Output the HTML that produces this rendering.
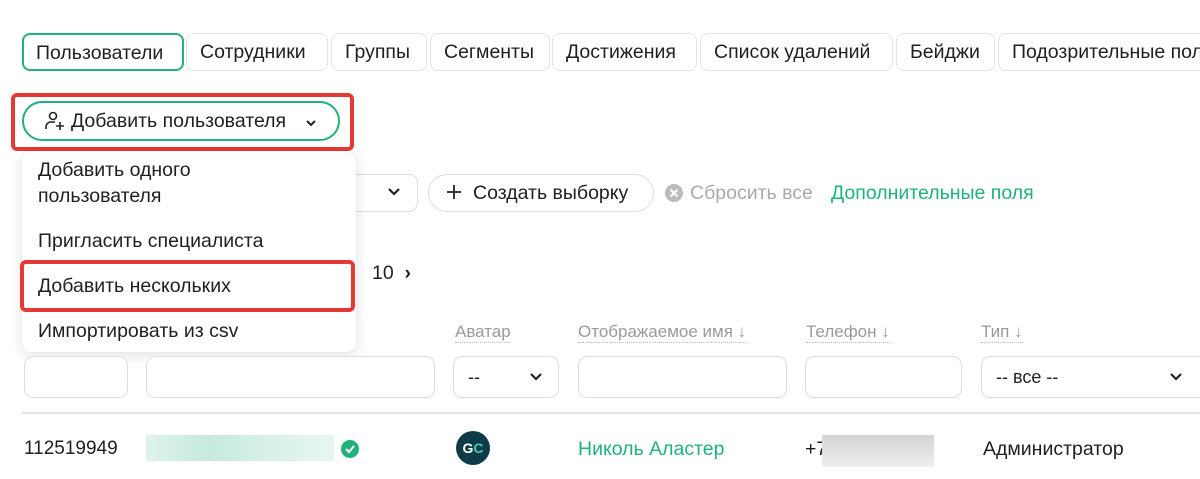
<!DOCTYPE html><html><head><meta charset="utf-8"><style>
body{margin:0;width:1200px;height:479px;overflow:hidden;background:#fff;font-family:"Liberation Sans","Noto Sans CJK SC",sans-serif;color:#1f1f1f;position:relative}
.a{position:absolute;white-space:nowrap}
.tab{position:absolute;top:33px;height:38px;border:1px solid #e2e2e2;border-radius:8px;box-sizing:border-box;font-size:19.5px;line-height:36px;padding-left:13px;white-space:nowrap;overflow:hidden}
.box{position:absolute;border:1px solid #ddd;border-radius:9px;box-sizing:border-box;background:#fff}
.h{position:absolute;top:322px;font-size:17px;color:#9a9a9a;border-bottom:1px dotted #bbb;line-height:20px}
.m{position:absolute;left:38px;font-size:19.5px;white-space:nowrap}
</style></head><body>
<div class="tab" style="left:22px;width:162px;border:2px solid #20b27a;padding-left:12px">Пользователи</div>
<div class="tab" style="left:186px;width:142px">Сотрудники</div>
<div class="tab" style="left:331px;width:96px">Группы</div>
<div class="tab" style="left:430px;width:120px">Сегменты</div>
<div class="tab" style="left:552px;width:145px">Достижения</div>
<div class="tab" style="left:700px;width:193px">Список удалений</div>
<div class="tab" style="left:896px;width:99px">Бейджи</div>
<div class="tab" style="left:998px;width:230px">Подозрительные пользователи</div>

<div class="a" style="left:11px;top:93px;width:343px;height:58px;border:4px solid #e53935;border-radius:6px;box-sizing:border-box"></div>
<div class="a" style="left:22px;top:101px;width:318px;height:40px;border:2px solid #20b27a;border-radius:20px;box-sizing:border-box"></div>
<svg class="a" style="left:44px;top:110px" width="22" height="22" viewBox="0 0 22 22" fill="none" stroke="#222" stroke-width="1.6"><circle cx="9" cy="6" r="3.5"/><path d="M2 19v-2a5 5 0 0 1 5-5h4M16 12v8M12 16h8"/></svg>
<div class="a" style="left:71px;top:110px;font-size:19.5px">Добавить пользователя</div>
<svg class="a" style="left:305px;top:118px" width="12" height="10"><path d="M2 3l4 4 4-4" stroke="#222" stroke-width="2" fill="none"/></svg>

<div class="box" style="left:150px;top:174px;width:268px;height:38px"></div>
<svg class="a" style="left:386px;top:185px" width="16" height="14"><path d="M3 4l5 5 5-5" stroke="#222" stroke-width="2.2" fill="none"/></svg>
<div class="box" style="left:428px;top:174px;width:226px;height:38px;border-radius:19px"></div>
<svg class="a" style="left:445px;top:183px" width="18" height="18"><path d="M9 2v14M2 9h14" stroke="#222" stroke-width="1.8"/></svg>
<div class="a" style="left:473px;top:182px;font-size:19.5px">Создать выборку</div>
<svg class="a" style="left:664px;top:183px" width="20" height="20"><circle cx="10" cy="10" r="9" fill="#bbb"/><path d="M6.5 6.5l7 7M13.5 6.5l-7 7" stroke="#fff" stroke-width="2"/></svg>
<div class="a" style="left:690px;top:182px;font-size:19.5px;color:#aaa">Сбросить все</div>
<div class="a" style="left:831px;top:182px;font-size:19.5px;color:#20b27a">Дополнительные поля</div>
<div class="a" style="left:372px;top:262px;font-size:19.5px">10 &nbsp;<b>›</b></div>

<div class="a" style="left:22px;top:152px;width:334px;height:200px;background:#fff;border-radius:10px;box-shadow:0 3px 14px rgba(0,0,0,.13)"></div>
<div class="m" style="top:157px;line-height:26px">Добавить одного<br>пользователя</div>
<div class="m" style="top:230px">Пригласить специалиста</div>
<div class="a" style="left:20px;top:260px;width:335px;height:52px;border:4px solid #e53935;border-radius:6px;box-sizing:border-box"></div>
<div class="m" style="top:275px">Добавить нескольких</div>
<div class="m" style="top:320px">Импортировать из csv</div>

<div class="h" style="left:455px">Аватар</div>
<div class="h" style="left:578px">Отображаемое имя ↓</div>
<div class="h" style="left:806px">Телефон ↓</div>
<div class="h" style="left:981px">Тип ↓</div>
<div class="box" style="left:24px;top:356px;width:104px;height:42px"></div>
<div class="box" style="left:146px;top:356px;width:289px;height:42px"></div>
<div class="box" style="left:453px;top:356px;width:106px;height:42px"></div>
<div class="a" style="left:468px;top:367px;font-size:18px">--</div>
<svg class="a" style="left:528px;top:371px" width="16" height="12"><path d="M3 3l5 5 5-5" stroke="#222" stroke-width="2.2" fill="none"/></svg>
<div class="box" style="left:578px;top:356px;width:209px;height:42px"></div>
<div class="box" style="left:805px;top:356px;width:157px;height:42px"></div>
<div class="box" style="left:981px;top:356px;width:230px;height:42px"></div>
<div class="a" style="left:996px;top:367px;font-size:18px">-- все --</div>
<svg class="a" style="left:1168px;top:371px" width="16" height="12"><path d="M3 3l5 5 5-5" stroke="#222" stroke-width="2.2" fill="none"/></svg>
<div class="a" style="left:22px;top:412px;width:1178px;height:2px;background:#e4e4e4"></div>

<div class="a" style="left:24px;top:438px;font-size:19px">112519949</div>
<div class="a" style="left:146px;top:435px;width:188px;height:26px;background:linear-gradient(90deg,#dff3ec,#c5eadb,#d8f1e8,#e8f6f0)"></div>
<svg class="a" style="left:340px;top:439px" width="20" height="20"><circle cx="10" cy="10" r="9" fill="#20b27a"/><path d="M6 10l3 3 5-6" stroke="#fff" stroke-width="2" fill="none"/></svg>
<div class="a" style="left:456px;top:431px;width:34px;height:34px;border-radius:50%;background:#0f3b47;color:#fff;font-size:14px;font-weight:bold;text-align:center;line-height:34px">G<span style="color:#3fd0b0">C</span></div>
<div class="a" style="left:578px;top:438px;font-size:19.5px;color:#20b27a">Николь Аластер</div>
<div class="a" style="left:805px;top:438px;font-size:19.5px">+7</div>
<div class="a" style="left:822px;top:435px;width:112px;height:32px;background:linear-gradient(#d4d4d4,#eee)"></div>
<div class="a" style="left:983px;top:438px;font-size:19.5px">Администратор</div>
</body></html>
